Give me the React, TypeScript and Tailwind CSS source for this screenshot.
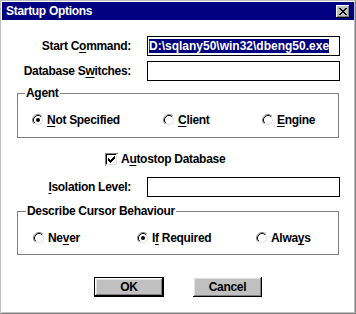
import React from "react";

const font = "font-['Liberation_Sans',Arial,sans-serif] font-bold text-[12px] leading-[14px] tracking-[-0.3px]";

const Radio = ({ checked }: { checked?: boolean }) => (
  <svg width="12" height="12" viewBox="0 0 12 12" className="shrink-0">
    <circle cx="6" cy="6" r="5" fill="#fff" />
    <path d="M9.89 2.11 A5.5 5.5 0 0 0 2.11 9.89" fill="none" stroke="#808080" />
    <path d="M9.18 2.82 A4.5 4.5 0 0 0 2.82 9.18" fill="none" stroke="#000" />
    <path d="M9.18 2.82 A4.5 4.5 0 0 1 2.82 9.18" fill="none" stroke="#dfdfdf" />
    {checked && <circle cx="6" cy="6" r="2" fill="#000" />}
  </svg>
);

const Checkbox = () => (
  <svg width="13" height="13" viewBox="0 0 13 13" shapeRendering="crispEdges" className="shrink-0">
    <rect x="0" y="0" width="13" height="13" fill="#fff" />
    <path d="M0 0.5H13M0.5 0V13" stroke="#808080" />
    <path d="M1 1.5H12M1.5 1V12" stroke="#000" />
    <path d="M1 11.5H12M11.5 1V12" stroke="#dfdfdf" />
    {[
      [3, 5],
      [4, 6],
      [5, 7],
      [6, 6],
      [7, 5],
      [8, 4],
      [9, 3],
    ].map(([x, y]) => (
      <rect key={x} x={x} y={y} width="1" height="3" fill="#000" />
    ))}
  </svg>
);

const CloseGlyph = () => (
  <svg width="8" height="7" viewBox="0 0 8 7" shapeRendering="crispEdges">
    {[
      [0, 0, 2],
      [6, 0, 2],
      [1, 1, 2],
      [5, 1, 2],
      [2, 2, 4],
      [3, 3, 2],
      [2, 4, 4],
      [1, 5, 2],
      [5, 5, 2],
      [0, 6, 2],
      [6, 6, 2],
    ].map(([x, y, w], i) => (
      <rect key={i} x={x} y={y} width={w} height="1" fill="#000" />
    ))}
  </svg>
);

const Field = ({ children }: { children?: React.ReactNode }) => (
  <div className="ml-[16px] flex h-[20px] w-[193px] items-center border border-black bg-white px-[1px]">
    {children}
  </div>
);

const FieldRow = ({ label, children, className }: { label: React.ReactNode; children?: React.ReactNode; className?: string }) => (
  <div className={`flex items-center ${className}`}>
    <div className="w-[129px] text-right">{label}</div>
    <Field>{children}</Field>
  </div>
);

const Option = ({ label, checked, width }: { label: React.ReactNode; checked?: boolean; width?: string }) => (
  <div className={`flex h-[14px] items-center gap-[3px] ${width ?? ""}`}>
    <Radio checked={checked} />
    <span>{label}</span>
  </div>
);

const u = "underline decoration-1 underline-offset-[2px]";

export default function App() {
  return (
    <div className={`${font} h-[314px] w-[356px] border border-t-[#c0c0c0] border-l-[#c0c0c0] border-r-[#808080] border-b-[#808080] bg-white text-black`}>
      <div className="flex h-full flex-col border border-t-white border-l-white border-r-[#c0c0c0] border-b-[#c0c0c0]">
        <div className="flex h-[18px] items-center justify-between bg-[#000080] pl-[4px] pr-[4px] text-white">
          <span>Startup Options</span>
          <div className="flex h-[13px] w-[14px] items-center justify-center bg-[#c0c0c0] shadow-[inset_-1px_-1px_#000,inset_1px_1px_#fff,inset_-2px_-2px_#808080]">
            <CloseGlyph />
          </div>
        </div>

        <div className="flex flex-col">
          <FieldRow className="mt-[16px]" label={<>Start C<span className={u}>o</span>mmand:</>}>
            <span className="bg-[#000080] text-white tracking-[0px]">D:\sqlany50\win32\dbeng50.exe</span>
          </FieldRow>
          <FieldRow className="mt-[5px]" label={<>Database S<span className={u}>w</span>itches:</>} />

          <div className="relative ml-[15px] mt-[12px] h-[45px] w-[322px] border border-[#808080] pl-[14px] pt-[19px]">
            <span className="absolute left-[7px] top-[-8px] bg-white px-[1px]">Agent</span>
            <div className="flex">
              <Option width="w-[131px]" checked label={<><span className={u}>N</span>ot Specified</>} />
              <Option width="w-[99px]" label={<><span className={u}>C</span>lient</>} />
              <Option label={<><span className={u}>E</span>ngine</>} />
            </div>
          </div>

          <div className="mt-[14px] flex h-[14px] items-center gap-[3px] pl-[103px]">
            <Checkbox />
            <span>A<span className={u}>u</span>tostop Database</span>
          </div>

          <FieldRow className="mt-[11px]" label={<><span className={u}>I</span>solation Level:</>} />

          <div className="relative ml-[15px] mt-[14px] h-[44px] w-[322px] border border-[#808080] pl-[15px] pt-[19px]">
            <span className="absolute left-[8px] top-[-8px] bg-white px-[1px]">Describe Cursor Behaviour</span>
            <div className="flex">
              <Option width="w-[104px]" label={<>Ne<span className={u}>v</span>er</>} />
              <Option width="w-[119px]" checked label={<>I<span className={u}>f</span> Required</>} />
              <Option label={<>Alwa<span className={u}>y</span>s</>} />
            </div>
          </div>

          <div className="mt-[22px] flex justify-center gap-[29px]">
            <button className="flex h-[20px] w-[70px] items-center justify-center border border-black bg-[#c0c0c0] shadow-[inset_-1px_-1px_#000,inset_1px_1px_#fff,inset_-2px_-2px_#808080,inset_2px_2px_#dfdfdf]">
              OK
            </button>
            <button className="flex h-[20px] w-[69px] items-center justify-center bg-[#c0c0c0] shadow-[inset_-1px_-1px_#000,inset_1px_1px_#fff,inset_-2px_-2px_#808080,inset_2px_2px_#dfdfdf]">
              Cancel
            </button>
          </div>
        </div>
      </div>
    </div>
  );
}
